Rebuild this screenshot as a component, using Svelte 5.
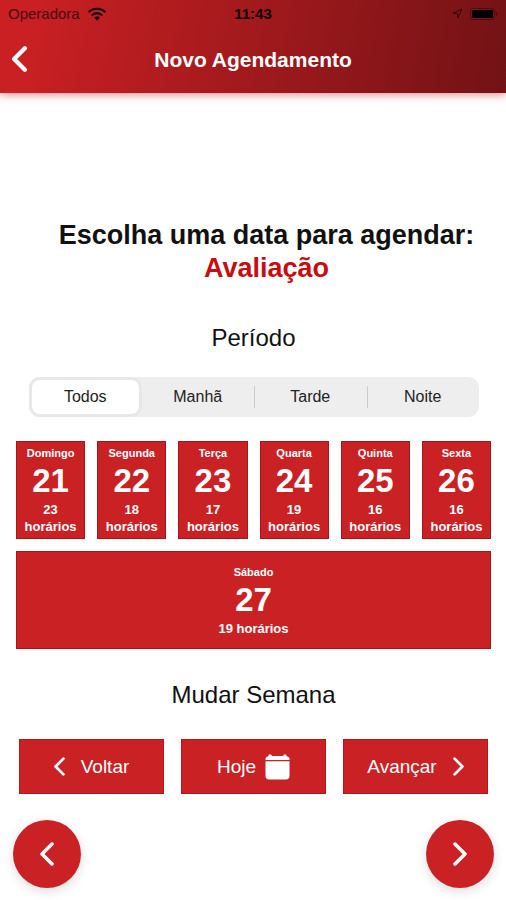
<script lang="ts">
  interface Day {
    name: string;
    date: number;
    slots: number;
  }

  const periods = ['Todos', 'Manhã', 'Tarde', 'Noite'];

  const days: Day[] = [
    { name: 'Domingo', date: 21, slots: 23 },
    { name: 'Segunda', date: 22, slots: 18 },
    { name: 'Terça', date: 23, slots: 17 },
    { name: 'Quarta', date: 24, slots: 19 },
    { name: 'Quinta', date: 25, slots: 16 },
    { name: 'Sexta', date: 26, slots: 16 },
    { name: 'Sábado', date: 27, slots: 19 },
  ];

  let period = $state('Todos');
</script>

{#snippet chevron(dir: 'left' | 'right', height: number)}
  <svg class="chevron" width={Math.round(height * 0.58)} {height} viewBox="0 0 14 24" aria-hidden="true">
    <path d={dir === 'left' ? 'M12 2L2 12l10 10' : 'M2 2l10 10L2 22'} />
  </svg>
{/snippet}

<div class="screen">
  <header>
    <div class="status">
      <div class="carrier">
        <span>Operadora</span>
        <svg width="20" height="14" viewBox="0 0 20 14" aria-hidden="true">
          <path class="arc" d="M1.6 5.2C6.2.7 13.8.7 18.4 5.2M4.7 8.4c3-2.9 7.6-2.9 10.6 0" />
          <path d="M10 13.6l-2.9-2.9c1.6-1.5 4.2-1.5 5.8 0z" />
        </svg>
      </div>
      <span class="clock">11:43</span>
      <div class="indicators">
        <svg width="11" height="11" viewBox="0 0 11 11" aria-hidden="true">
          <path class="arrow" d="M10 1L1 5.2l4.4.4.4 4.4z" />
        </svg>
        <svg width="28" height="12" viewBox="0 0 28 12" aria-hidden="true">
          <rect class="shell" x=".5" y=".5" width="24" height="11" rx="3" />
          <rect x="2" y="2" width="21" height="8" rx="1.5" />
          <path class="tip" d="M26 4c1.6.5 1.6 3.5 0 4z" />
        </svg>
      </div>
    </div>
    <nav>
      <button type="button" class="back" aria-label="Voltar para a tela anterior">
        {@render chevron('left', 26)}
      </button>
      <h1>Novo Agendamento</h1>
    </nav>
  </header>

  <main>
    <h2>Escolha uma data para agendar: <strong>Avaliação</strong></h2>

    <h3>Período</h3>
    <div class="periods" role="group" aria-label="Período">
      {#each periods as p}
        <button
          type="button"
          class:on={period === p}
          aria-pressed={period === p}
          onclick={() => (period = p)}
        >{p}</button>
      {/each}
    </div>

    <div class="days">
      {#each days as day}
        <button type="button" class="day">
          <span class="name">{day.name}</span>
          <span class="date">{day.date}</span>
          <span class="slots">{day.slots} horários</span>
        </button>
      {/each}
    </div>

    <h3>Mudar Semana</h3>
    <div class="week">
      <button type="button" class="prev">{@render chevron('left', 19)} Voltar</button>
      <button type="button">
        Hoje
        <svg class="calendar" width="25" height="26" viewBox="0 0 25 26" aria-hidden="true">
          <path d="M3 2.5L4 .5h2l1 1.5h11L19 .5h2l1 2c1.7 0 2.5 1 2.5 2.5v1H.5V5C.5 3.500 1.300 2.500 3 2.500z" />
          <path d="M.5 7.300h24v14.700c0 2.200-1.300 3.500-3.500 3.500H4C1.800 25.500.5 24.200.5 22z" />
        </svg>
      </button>
      <button type="button" class="next">Avançar {@render chevron('right', 19)}</button>
    </div>
  </main>

  <footer>
    <button type="button" aria-label="Etapa anterior">{@render chevron('left', 24)}</button>
    <button type="button" aria-label="Próxima etapa">{@render chevron('right', 24)}</button>
  </footer>
</div>

<style>
  :global(body) {
    margin: 0;
    background: #fff;
  }
  .screen {
    display: flex;
    flex-direction: column;
    min-height: 100vh;
    font-family: "Liberation Sans", Helvetica, Arial, sans-serif;
    color: #111;
  }
  button {
    margin: 0;
    padding: 0;
    border: none;
    background: none;
    color: inherit;
    font: inherit;
    cursor: pointer;
  }
  h1, h2, h3 {
    margin: 0;
  }
  .chevron {
    fill: none;
    stroke: #fff;
    stroke-width: 3.5;
    stroke-linecap: round;
    stroke-linejoin: round;
  }

  header {
    background: linear-gradient(100deg, #cb2023 5%, #721215 100%);
    box-shadow: 0 2px 8px rgba(203, 32, 36, 0.5);
  }
  .status {
    display: grid;
    grid-template-columns: 1fr auto 1fr;
    align-items: center;
    height: 27px;
    padding: 0 8px;
    font-size: 15px;
    color: #100406;
  }
  .carrier,
  .indicators {
    display: flex;
    align-items: center;
    gap: 7px;
  }
  .carrier span {
    opacity: 0.7;
  }
  .clock {
    font-size: 15px;
    font-weight: 700;
  }
  .indicators {
    justify-content: flex-end;
  }
  .arc,
  .arrow,
  .shell {
    fill: none;
    stroke: currentColor;
  }
  .arc {
    stroke-width: 2;
  }
  .arrow {
    opacity: 0.7;
  }
  .shell,
  .tip {
    opacity: 0.4;
  }
  nav {
    display: grid;
    grid-template-columns: 40px 1fr 40px;
    align-items: center;
    height: 66px;
    color: #fff;
  }
  .back {
    display: flex;
    padding: 8px 12px 10px;
  }
  .back .chevron {
    stroke-width: 4;
  }
  h1 {
    font-size: 21px;
    line-height: 26px;
    font-weight: 700;
    text-align: center;
  }

  main {
    flex: 1;
    padding: 126px 15px 0 16px;
  }
  h2 {
    padding-left: 26px;
    font-size: 27px;
    line-height: 33px;
    font-weight: 700;
    text-align: center;
  }
  h2 strong {
    display: block;
    color: #c80c10;
  }
  h3 {
    padding: 37px 0 23px;
    font-size: 24px;
    line-height: 32px;
    font-weight: 400;
    text-align: center;
  }
  .days + h3 {
    padding: 30px 0 28px;
  }
  .periods {
    display: flex;
    margin: 0 12px 24px 13px;
    border-radius: 11px;
    background: #eee;
  }
  .periods button {
    position: relative;
    box-sizing: border-box;
    width: 25%;
    height: 40px;
    font-size: 16px;
    color: #222;
  }
  .periods button.on {
    border: 3px solid #e8e8e8;
    border-radius: 11px;
    background: #fff;
  }
  .periods button:not(.on) + button:not(.on)::before {
    content: "";
    position: absolute;
    left: 0;
    top: 9px;
    bottom: 9px;
    width: 1px;
    background: #ccc;
  }

  .days {
    display: flex;
    flex-wrap: wrap;
    gap: 12px;
  }
  .day {
    display: flex;
    flex: 1 0 64px;
    flex-direction: column;
    align-items: center;
    justify-content: center;
    box-sizing: border-box;
    min-height: 98px;
    border: 1px solid #a81417;
    background: #ca2124;
    color: #fff;
    font-weight: 700;
  }
  .name {
    font-size: 11px;
    line-height: 16px;
  }
  .date {
    font-size: 33px;
    line-height: 40px;
  }
  .slots {
    font-size: 13px;
    line-height: 17px;
  }

  .week {
    display: flex;
    gap: 17px;
    padding: 0 3px;
  }
  .week button {
    display: flex;
    flex: 1;
    align-items: center;
    justify-content: center;
    gap: 9px;
    box-sizing: border-box;
    height: 55px;
    border: 1px solid #c01216;
    background: #ca2124;
    color: #fff;
    font-size: 19px;
  }
  .week .prev,
  .week .next {
    gap: 16px;
  }
  .calendar {
    fill: #fff;
  }

  footer {
    display: flex;
    justify-content: space-between;
    padding: 26px 12px 12px 13px;
  }
  footer button {
    display: flex;
    align-items: center;
    justify-content: center;
    width: 68px;
    height: 68px;
    border-radius: 50%;
    background: #ca2124;
    box-shadow: 0 3px 12px rgba(0, 0, 0, 0.14);
  }
</style>
